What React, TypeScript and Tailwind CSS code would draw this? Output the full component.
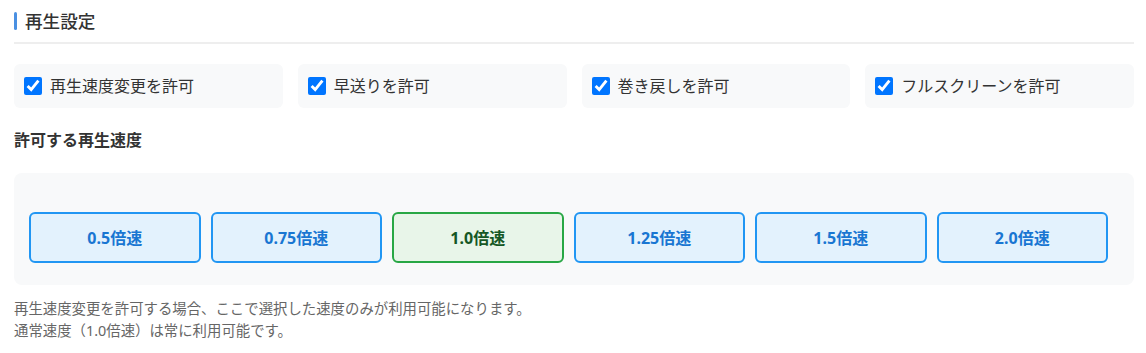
const permissions = ["再生速度変更を許可", "早送りを許可", "巻き戻しを許可", "フルスクリーンを許可"];

const speeds = [
  { label: "0.5倍速", active: false },
  { label: "0.75倍速", active: false },
  { label: "1.0倍速", active: true },
  { label: "1.25倍速", active: false },
  { label: "1.5倍速", active: false },
  { label: "2.0倍速", active: false },
];

export default function App() {
  return (
    <div
      className="bg-white pl-[14px] pr-[12px] text-[#333]"
      style={{ fontFamily: '"Noto Sans", "Noto Sans CJK JP", sans-serif' }}
    >
      {/* Section header */}
      <div className="flex items-center gap-[8px] border-b-2 border-[#eeeeee] pt-[10px] pb-[10px]">
        <span className="h-[18px] w-[3px] rounded-full bg-[#4a90e2]" />
        <h2 className="text-[17.6px] leading-[22px] font-medium">再生設定</h2>
      </div>

      {/* Permission checkboxes */}
      <div className="mt-[20px] grid grid-cols-4 gap-[15px]">
        {permissions.map((p) => (
          <label key={p} className="flex h-[44px] items-center gap-[8px] rounded-[6px] bg-[#f8f9fa] px-[10px]">
            <input type="checkbox" defaultChecked className="h-[18px] w-[18px] accent-[#0075ff]" />
            <span className="text-[16px] leading-[24px]">{p}</span>
          </label>
        ))}
      </div>

      {/* Allowed speeds */}
      <h3 className="mt-[20px] text-[16px] leading-[24px] font-bold">許可する再生速度</h3>
      <div className="mt-[21px] flex gap-[10px] rounded-[8px] bg-[#f8f9fa] pt-[39px] pb-[22px] pl-[15px]">
        {speeds.map((s) => (
          <button
            key={s.label}
            className={
              s.active
                ? "h-[51px] w-[171.5px] rounded-[6px] border-2 border-[#28a745] bg-[#e8f5e9] text-[16px] font-bold text-[#155724]"
                : "h-[51px] w-[171.5px] rounded-[6px] border-2 border-[#2196f3] bg-[#e3f2fd] text-[16px] font-bold text-[#1976d2]"
            }
          >
            {s.label}
          </button>
        ))}
      </div>

      {/* Notes */}
      <p className="mt-[13px] text-[14.4px] leading-[22px] text-[#666]">
        再生速度変更を許可する場合、ここで選択した速度のみが利用可能になります。
        <br />
        通常速度（1.0倍速）は常に利用可能です。
      </p>
    </div>
  );
}
